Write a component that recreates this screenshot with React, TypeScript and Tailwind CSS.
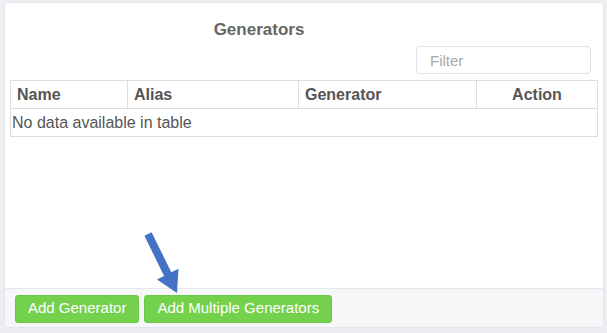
import React from "react";

const COLS = [
  { label: "Name", w: "w-[117px]", align: "text-left" },
  { label: "Alias", w: "w-[171px]", align: "text-left" },
  { label: "Generator", w: "w-[178px]", align: "text-left" },
  { label: "Action", w: "w-[121px]", align: "text-center" },
];

function Arrow() {
  // annotation arrow drawn over the page
  return (
    <svg className="pointer-events-none absolute left-0 top-0" width="607" height="333">
      <polygon
        points="151.6,232.2 171.3,272.3 178.5,268.8 177,293 156.9,279.4 164.1,275.9 144.4,235.8"
        fill="#4472c4"
      />
    </svg>
  );
}

export default function App() {
  return (
    <div
      className="relative h-[333px] w-[607px] overflow-hidden bg-[#eceef1] pl-[4px] pt-[2px]"
      style={{ fontFamily: '"Liberation Sans", Arial, sans-serif' }}
    >
      <div className="flex h-[326px] w-[600px] flex-col rounded-[3px] border border-[#e3e6ea] bg-white">
        {/* Body */}
        <div className="flex-1 px-[5px]">
          <div className="w-[498px] pt-[17px] text-center text-[17px] font-bold leading-[20px] text-[#666]">
            Generators
          </div>
          <div className="mt-[6px] flex justify-end pr-[7px]">
            <input
              placeholder="Filter"
              className="h-[28px] w-[175px] rounded-[4px] border border-[#e2e2e2] bg-white px-[13px] text-[15px] text-[#555] outline-none placeholder:text-[#a9a9a9]"
            />
          </div>
          <table className="mt-[6px] w-[587px] table-fixed border-collapse text-[16px] text-[#555]">
            <colgroup>
              {COLS.map((c) => (
                <col key={c.label} className={c.w} />
              ))}
            </colgroup>
            <thead>
              <tr className="h-[28px]">
                {COLS.map((c) => (
                  <th
                    key={c.label}
                    className={`border border-[#dddddd] px-[6px] py-0 font-bold leading-[18px] ${c.align}`}
                  >
                    {c.label}
                  </th>
                ))}
              </tr>
            </thead>
            <tbody>
              <tr className="h-[28px]">
                <td colSpan={4} className="border border-[#dddddd] px-[1px] py-0 leading-[18px]">
                  No data available in table
                </td>
              </tr>
            </tbody>
          </table>
        </div>

        {/* Footer */}
        <div className="flex h-[39px] items-center gap-[5px] border-t border-[#e3e6ea] bg-[#f6f7f9] px-[10px] pt-[1px]">
          <button className="h-[28px] rounded-[3px] border border-[#6bc843] bg-[#74d14c] px-[12px] text-[15px] text-white">
            Add Generator
          </button>
          <button className="h-[28px] rounded-[3px] border border-[#6bc843] bg-[#74d14c] px-[12px] text-[15px] text-white">
            Add Multiple Generators
          </button>
        </div>
      </div>
      <Arrow />
    </div>
  );
}
